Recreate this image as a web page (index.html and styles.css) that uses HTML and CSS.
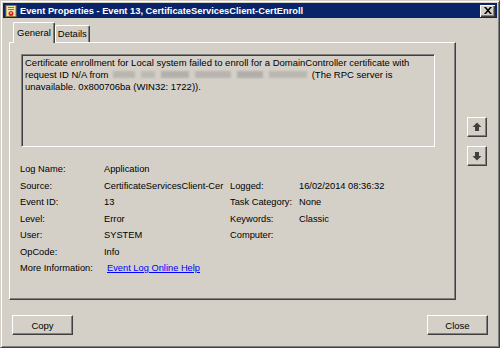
FILE: index.html
```html
<!DOCTYPE html>
<html>
	<head>
		<meta charset="UTF-8">
		<title>Event Properties</title>
		<link rel="stylesheet" href="styles.css">
	</head>
	<body>
		<div class="window">
			<div class="titlebar">
				<svg class="ticon" width="12" height="12" viewBox="0 0 12 12">
					<rect x="1" y="0.5" width="10" height="11" fill="#f3e6a8" stroke="#8a7a3a"/>
					<rect x="3" y="2" width="6" height="1" fill="#8a7a3a"/>
					<rect x="3" y="4" width="6" height="1" fill="#8a7a3a"/>
					<circle cx="6" cy="8.5" r="2.5" fill="#d22"/>
					<rect x="5.5" y="7" width="1" height="2" fill="#fff"/>
				</svg>
				<span class="ttext">Event Properties - Event 13, CertificateServicesClient-CertEnroll</span>
				<span class="tclose">
					<svg width="8" height="7" viewBox="0 0 8 7"><path d="M0 0h2l2 2.2L6 0h2L5 3.5 8 7H6L4 4.8 2 7H0l3-3.5z" fill="#000"/></svg>
				</span>
			</div>
			<div class="main">
				<div class="tabwrap">
					<div class="tabhead">
						<div class="tab on">General</div>
						<div class="tab">Details</div>
					</div>
					<div class="panel">
						<div class="msg">
							<div>Certificate enrollment for Local system failed to enroll for a DomainController certificate with</div>
							<div>request ID N/A from <svg class="blur" width="198" height="9" viewBox="0 0 198 9">
								<filter id="bl"><feGaussianBlur stdDeviation="1.1"/></filter>
								<g filter="url(#bl)">
									<rect x="2" y="1" width="22" height="7" fill="#b9b6b0"/>
									<rect x="30" y="1" width="14" height="7" fill="#bdbab4"/>
									<rect x="50" y="1" width="28" height="7" fill="#b3b0ab"/>
									<rect x="84" y="1" width="36" height="7" fill="#b8b5b0"/>
									<rect x="126" y="1" width="26" height="7" fill="#b1aea9"/>
									<rect x="158" y="1" width="38" height="7" fill="#bab7b1"/>
								</g>
							</svg> (The RPC server is</div>
							<div>unavailable. 0x800706ba (WIN32: 1722)).</div>
						</div>
						<div class="fields">
							<div>Log Name:</div><div>Application</div><div></div><div></div>
							<div>Source:</div><div>CertificateServicesClient-Cer</div><div>Logged:</div><div>16/02/2014 08:36:32</div>
							<div>Event ID:</div><div>13</div><div>Task Category:</div><div>None</div>
							<div>Level:</div><div>Error</div><div>Keywords:</div><div>Classic</div>
							<div>User:</div><div>SYSTEM</div><div>Computer:</div><div></div>
							<div>OpCode:</div><div>Info</div><div></div><div></div>
						</div>
						<div class="more">
							<span class="mlabel">More Information:</span>
							<a href="#">Event Log Online Help</a>
						</div>
					</div>
				</div>
				<div class="side">
					<span class="arrbtn">
						<svg width="10" height="10" viewBox="0 0 10 10"><path d="M5 0.5L9.5 5H7v4H3V5H0.5z" fill="#404040"/></svg>
					</span>
					<span class="arrbtn">
						<svg width="10" height="10" viewBox="0 0 10 10"><path d="M5 9.5L9.5 5H7V1H3v4H0.5z" fill="#404040"/></svg>
					</span>
				</div>
			</div>
			<div class="foot">
				<span class="btn">Copy</span>
				<span class="btn">Close</span>
			</div>
		</div>
	</body>
</html>
```

FILE: styles.css
```css
*{margin:0;padding:0;box-sizing:border-box;}
body{background:#d4d0c8;font-family:"Liberation Sans",Arial,sans-serif;font-size:9.5px;color:#000;}
.window{width:500px;height:348px;background:#d4d0c8;border:1px solid;border-color:#d4d0c8 #404040 #404040 #d4d0c8;
	box-shadow:inset 1px 1px #fff,inset -1px -1px #808080;padding:2px;}
.titlebar{height:15px;background:#0a246a;display:flex;align-items:center;padding-left:2px;}
.ticon{flex:none;}
.ttext{color:#fff;font-weight:bold;font-size:9.3px;margin-left:3px;white-space:nowrap;flex:1;}
.tclose{width:15px;height:12px;margin-right:2px;background:#d4d0c8;display:flex;align-items:center;justify-content:center;
	box-shadow:inset 1px 1px #fff,inset -1px -1px #404040,inset -2px -2px #808080;}
.main{display:flex;margin-top:4px;}
.tabwrap{margin-left:6px;width:447px;}
.tabhead{display:flex;align-items:flex-end;height:20px;padding-left:4px;position:relative;z-index:1;}
.tab{height:17px;padding:0 2px;line-height:16px;border:1px solid;border-bottom:none;border-color:#fff #404040 #404040 #fff;
	box-shadow:inset -1px 0 #808080;border-radius:2px 2px 0 0;white-space:nowrap;}
.tab.on{height:21px;margin-bottom:-1px;padding:0 3px;line-height:19px;background:#d4d0c8;}
.panel{height:258px;border:1px solid;border-color:#fff #404040 #404040 #fff;box-shadow:inset -1px -1px #808080;padding:11px 0 0 11px;}
.msg{width:414px;height:93px;border:1px solid;border-color:#808080 #fff #fff #808080;box-shadow:inset 1px 1px #404040,inset -1px -1px #d4d0c8;
	padding:2px 8px 0 3px;line-height:12px;white-space:nowrap;}
.blur{vertical-align:-1px;}
.fields{display:grid;grid-template-columns:84px 126px 69px 1fr;grid-auto-rows:16.5px;line-height:16.5px;margin:14px 0 0 -1px;font-size:9.3px;}
.more{display:flex;margin-left:-1px;line-height:16.5px;font-size:9.3px;}
.mlabel{width:87px;}
.more a{color:#0000ff;text-decoration:underline;}
.side{display:flex;flex-direction:column;gap:9px;margin:95px 0 0 11px;}
.arrbtn{width:20px;height:20px;display:flex;align-items:center;justify-content:center;background:#d4d0c8;
	border:1px solid;border-color:#fff #404040 #404040 #fff;box-shadow:inset -1px -1px #808080;}
.foot{display:flex;justify-content:space-between;margin-top:15px;padding:0 9px 0 9px;}
.btn{width:61px;height:20px;display:flex;align-items:center;justify-content:center;border:1px solid;
	border-color:#fff #404040 #404040 #fff;box-shadow:inset -1px -1px #808080;}
```
